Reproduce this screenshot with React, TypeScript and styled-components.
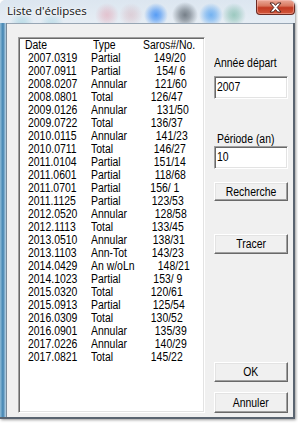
import React from "react";
import styled, { createGlobalStyle } from "styled-components";

const Global = createGlobalStyle`
  html, body { margin: 0; padding: 0; background: #ffffff; overflow: hidden; }
  #root { width: 298px; height: 423px; }
`;

const UI_FONT = `"Liberation Sans", Arial, sans-serif`;

const Window = styled.div`
  width: 295px;
  height: 419px;
  display: flex;
  flex-direction: column;
  border-radius: 6px 6px 0 0;
  overflow: hidden;
  box-shadow: 1px 1px 3px rgba(0, 0, 0, 0.4);
  background: #d6e3ef;
`;

const blob = (x: number, y: number, c: string, a: number, r: number) =>
  `radial-gradient(circle at ${x}px ${y}px, rgba(${c}, ${a}) 0, rgba(${c}, ${a * 0.7}) ${r * 0.4}px, rgba(${c}, 0) ${r}px)`;

const TitleBar = styled.div`
  height: 23px;
  flex: none;
  display: flex;
  align-items: flex-start;
  justify-content: space-between;
  background:
    ${blob(107, 15, "226, 120, 140", 0.35, 12)},
    ${blob(131, 15, "205, 135, 145", 0.28, 12)},
    ${blob(156, 15, "40, 130, 245", 0.75, 12)},
    ${blob(185, 15, "60, 70, 80", 0.65, 13)},
    ${blob(211, 15, "40, 140, 240", 0.6, 12)},
    ${blob(234, 15, "70, 160, 130", 0.45, 12)},
    ${blob(22, 24, "90, 180, 200", 0.3, 12)},
    ${blob(52, 24, "90, 180, 200", 0.25, 12)},
    linear-gradient(#dce6f0, #e6edf4);
`;

const Title = styled.div`
  margin: 4px 0 0 7px;
  font-family: "Open Sans", "Noto Sans", sans-serif;
  font-size: 11.5px;
  line-height: 14px;
  color: #111;
  text-shadow: 0 0 4px #fff, 0 0 2px #fff;
`;

const CloseButton = styled.div`
  width: 39px;
  height: 15px;
  box-sizing: border-box;
  display: flex;
  align-items: center;
  justify-content: center;
  border: 1px solid #6b2a22;
  border-top: none;
  border-radius: 0 0 4px 4px;
  background: linear-gradient(#eaa999 0%, #d9785f 42%, #c23a22 55%, #d3583c 100%);
  box-shadow: inset 0 0 0 1px rgba(255, 200, 190, 0.45);
`;

const Main = styled.div`
  flex: 1;
  display: flex;
  min-height: 0;
`;

const LeftFrame = styled.div`
  width: 6px;
  flex: none;
  background: linear-gradient(90deg, #8fbcd8 0, #3f82b0 50%, #bcd4e6 100%);
  border-right: 1px solid #7a8a99;
`;

const RightFrame = styled.div`
  width: 2px;
  flex: none;
  background: #5a6470;
`;

const Client = styled.div`
  flex: 1;
  display: flex;
  gap: 9px;
  padding: 13px 5px 4px 11px;
  border-top: 1px solid #98a6b4;
  background: #f0f0f0;
  font-family: ${UI_FONT};
  font-size: 12px;
  color: #000;
`;

const BottomEdge = styled.div`
  height: 2px;
  flex: none;
  background: #5a6470;
`;

const ListBox = styled.div`
  width: 187px;
  box-sizing: border-box;
  background: #fff;
  border: 1px solid;
  border-color: #a0a0a0 #ffffff #ffffff #a0a0a0;
  box-shadow: inset 1px 1px 0 #696969, inset -1px -1px 0 #e3e3e3;
  padding: 1px 1px;
`;

/* narrow dialog font: Arial metrics, condensed horizontally */
const Txt = styled.span<{ $origin?: "left" | "center" | "right" }>`
  display: inline-block;
  white-space: pre;
  transform: scaleX(0.87);
  transform-origin: ${(p) =>
    p.$origin === "center" ? "50% 50%" : p.$origin === "right" ? "100% 50%" : "0 50%"};
`;

const HeaderRow = styled.div`
  display: grid;
  grid-template-columns: 68px 50px 1fr;
  padding-left: 5px;
  height: 13px;
  line-height: 13px;
`;

const Row = styled.div`
  display: grid;
  grid-template-columns: 71px 55px 1fr;
  height: 13px;
  line-height: 13px;
`;

const DateCell = styled.span`
  padding-left: 8px;
`;

const SarosCell = styled.span<{ $end: number }>`
  text-align: right;
  padding-right: ${(p) => p.$end}px;
`;

const Side = styled.div`
  width: 74px;
  display: flex;
  flex-direction: column;
`;

const Label = styled.div<{ $indent?: number; $top: number }>`
  height: 13px;
  line-height: 13px;
  margin-top: ${(p) => p.$top}px;
  padding-left: ${(p) => p.$indent ?? 0}px;
`;

const Field = styled.div<{ $top: number }>`
  height: 23px;
  box-sizing: border-box;
  margin-top: ${(p) => p.$top}px;
  background: #fff;
  border: 1px solid;
  border-color: #a0a0a0 #ffffff #ffffff #a0a0a0;
  box-shadow: inset 1px 1px 0 #696969, inset -1px -1px 0 #e3e3e3;
  padding: 3px 2px;
  line-height: 15px;
`;

const Button = styled.div<{ $top: number; $h?: number }>`
  height: ${(p) => p.$h ?? 20}px;
  box-sizing: border-box;
  margin-top: ${(p) => p.$top}px;
  display: flex;
  align-items: center;
  justify-content: center;
  background: #f0f0f0;
  border: 1px solid;
  border-color: #ffffff #696969 #696969 #ffffff;
  box-shadow: inset -1px -1px 0 #a0a0a0, inset 1px 1px 0 #e3e3e3;
`;

const Spacer = styled.div`
  flex: 1;
`;

// e = page x where the saros text ink ends
type Ecl = { d: string; t: string; s: string; e: number };

const rows: Ecl[] = [
  { d: "2007.0319", t: "Partial", s: "149/20", e: 185 },
  { d: "2007.0911", t: "Partial", s: "154/ 6", e: 185 },
  { d: "2008.0207", t: "Annular", s: "121/60", e: 186 },
  { d: "2008.0801", t: "Total", s: "126/47", e: 182 },
  { d: "2009.0126", t: "Annular", s: "131/50", e: 188 },
  { d: "2009.0722", t: "Total", s: "136/37", e: 182 },
  { d: "2010.0115", t: "Annular", s: "141/23", e: 187 },
  { d: "2010.0711", t: "Total", s: "146/27", e: 185 },
  { d: "2011.0104", t: "Partial", s: "151/14", e: 185 },
  { d: "2011.0601", t: "Partial", s: "118/68", e: 185 },
  { d: "2011.0701", t: "Partial", s: "156/ 1", e: 176 },
  { d: "2011.1125", t: "Partial", s: "123/53", e: 183 },
  { d: "2012.0520", t: "Annular", s: "128/58", e: 186 },
  { d: "2012.1113", t: "Total", s: "133/45", e: 183 },
  { d: "2013.0510", t: "Annular", s: "138/31", e: 184 },
  { d: "2013.1103", t: "Ann-Tot", s: "143/23", e: 183 },
  { d: "2014.0429", t: "An w/oLn", s: "148/21", e: 189 },
  { d: "2014.1023", t: "Partial", s: "153/ 9", e: 182 },
  { d: "2015.0320", t: "Total", s: "120/61", e: 182 },
  { d: "2015.0913", t: "Partial", s: "125/54", e: 184 },
  { d: "2016.0309", t: "Total", s: "130/52", e: 182 },
  { d: "2016.0901", t: "Annular", s: "135/39", e: 186 },
  { d: "2017.0226", t: "Annular", s: "140/29", e: 186 },
  { d: "2017.0821", t: "Total", s: "145/22", e: 182 },
];

// the rows' right edge sits at page x = 203
const ROW_RIGHT = 203;

function CloseGlyph() {
  return (
    <svg width="15" height="11" viewBox="0 0 15 11">
      <path
        d="M2 1 L5.4 1 L7.5 3.4 L9.6 1 L13 1 L9.2 5.5 L13 10 L9.6 10 L7.5 7.6 L5.4 10 L2 10 L5.8 5.5 Z"
        fill="#ffffff"
        stroke="#4e2420"
        strokeWidth="1"
        strokeLinejoin="round"
      />
    </svg>
  );
}

export default function App() {
  return (
    <>
      <Global />
      <Window>
        <TitleBar>
          <Title>Liste d'éclipses</Title>
          <CloseButton>
            <CloseGlyph />
          </CloseButton>
        </TitleBar>
        <Main>
          <LeftFrame />
          <Client>
            <ListBox>
              <HeaderRow>
                <Txt>Date</Txt>
                <Txt>Type</Txt>
                <Txt>Saros#/No.</Txt>
              </HeaderRow>
              {rows.map((r) => (
                <Row key={r.d}>
                  <DateCell>
                    <Txt>{r.d}</Txt>
                  </DateCell>
                  <Txt>{r.t}</Txt>
                  <SarosCell $end={ROW_RIGHT - r.e - 0.6}>
                    <Txt $origin="right">{r.s}</Txt>
                  </SarosCell>
                </Row>
              ))}
            </ListBox>
            <Side>
              <Label $top={20}>
                <Txt>Année départ</Txt>
              </Label>
              <Field $top={6}>
                <Txt>2007</Txt>
              </Field>
              <Label $top={34} $indent={3}>
                <Txt>Période (an)</Txt>
              </Label>
              <Field $top={0}>
                <Txt>10</Txt>
              </Field>
              <Button $top={13} $h={19}>
                <Txt $origin="center">Recherche</Txt>
              </Button>
              <Button $top={33}>
                <Txt $origin="center">Tracer</Txt>
              </Button>
              <Spacer />
              <Button $top={0}>
                <Txt $origin="center">OK</Txt>
              </Button>
              <Button $top={10} $h={21}>
                <Txt $origin="center">Annuler</Txt>
              </Button>
            </Side>
          </Client>
          <RightFrame />
        </Main>
        <BottomEdge />
      </Window>
    </>
  );
}
